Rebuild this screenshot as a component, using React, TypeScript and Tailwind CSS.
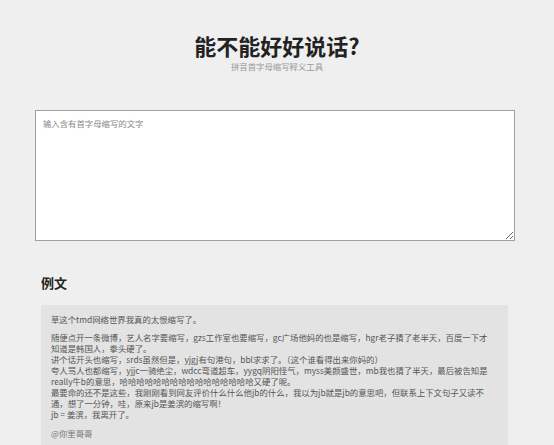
import React from 'react';

// rendered lines, wrapped as in the page
const lines = [
  '随便点开一条微博，艺人名字要缩写，gzs工作室也要缩写，gc广场他妈的也是缩写，hgr老子猜了老半天，百度一下才',
  '知道是韩国人，拳头硬了。',
  '讲个话开头也缩写，srds虽然但是，yjgj有句港句，bbl求求了。（这个谁看得出来你妈的）',
  '夸人骂人也都缩写，yjjc一骑绝尘，wdcc弯道超车，yygq阴阳怪气，myss美颜盛世，mb我也猜了半天，最后被告知是',
  'really牛b的意思，哈哈哈哈哈哈哈哈哈哈哈哈哈哈哈哈又硬了呢。',
  '最要命的还不是这些，我刚刚看到网友评价什么什么他jb的什么，我以为jb就是jb的意思吧，但联系上下文句子又读不',
  '通，想了一分钟，哇，原来jb是姜滨的缩写啊！',
  'jb = 姜滨，我离开了。',
];

export default function App() {
  const [text, setText] = React.useState('');

  return (
    <div
      className="min-h-[445px] bg-[#efefef] text-[#333]"
      style={{ fontFamily: '"Microsoft YaHei", "Noto Sans CJK SC", sans-serif' }}
    >
      {/* header */}
      <div className="pt-[30px] text-center">
        <h1 className="text-[22px] leading-[30px] font-bold text-[#222]">能不能好好说话?</h1>
        <p className="text-[8.4px] leading-[12px] text-[#999]">拼音首字母缩写释义工具</p>
      </div>

      {/* input */}
      <div className="ml-[35px] mt-[38px] w-[480px]">
        <textarea
          value={text}
          onChange={(e) => setText(e.target.value)}
          placeholder="输入含有首字母缩写的文字"
          className="block h-[131px] w-full resize-y border border-[#a0a0a0] bg-white px-[7px] py-[6px] text-[8.4px] leading-[12px] text-[#333] outline-none placeholder:text-[#888]"
        />
      </div>

      {/* 例文 */}
      <div className="ml-[41px] mt-[33px] w-[467px]">
        <h2 className="text-[13px] leading-[18px] font-bold text-[#222]">例文</h2>
        <div className="mt-[13px] bg-[#e3e3e3] px-[10px] pt-[9px] pb-[8px] text-[8.4px] leading-[11px] text-[#555]">
          <p>草这个tmd网络世界我真的太恨缩写了。</p>
          <div className="mt-[7px]">
            {lines.map((l, i) => (
              <div key={i} className="whitespace-nowrap">{l}</div>
            ))}
          </div>
          <p className="mt-[8px] text-[#777]">@你里哥哥</p>
        </div>
      </div>
    </div>
  );
}
